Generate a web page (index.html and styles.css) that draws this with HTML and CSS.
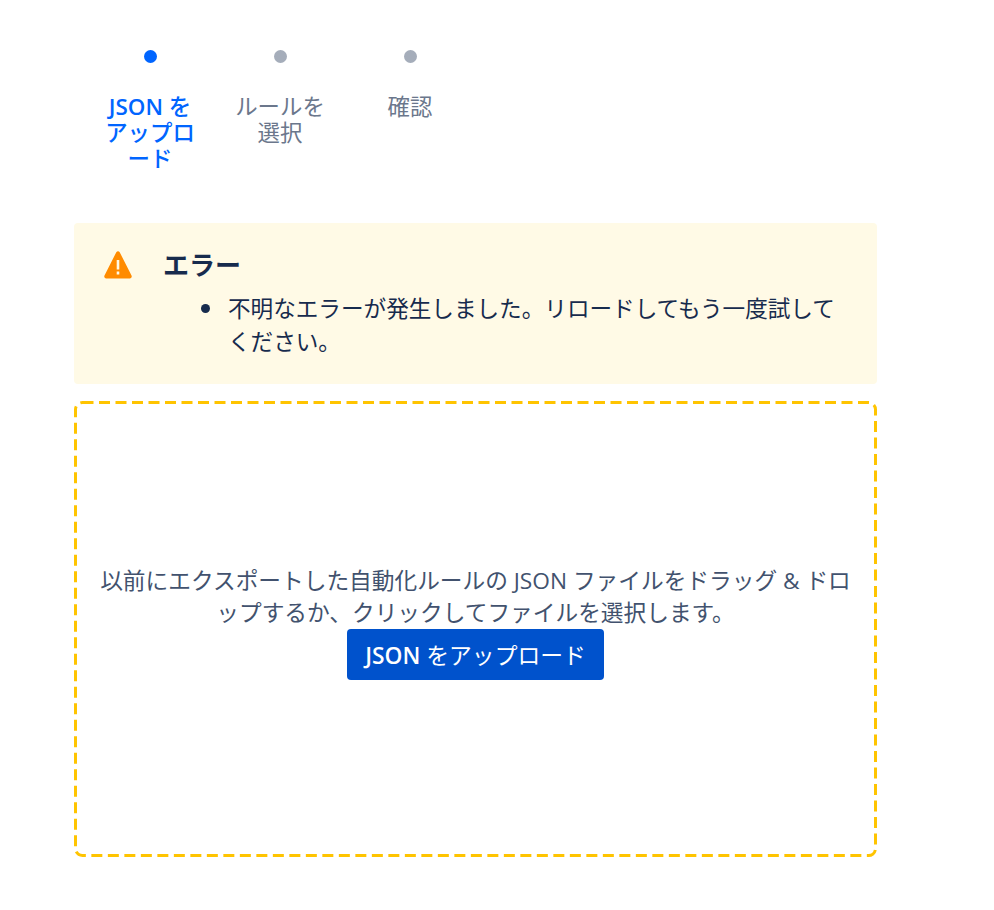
FILE: index.html
```html
<!DOCTYPE html>
<html lang="ja">
<head>
    <meta charset="UTF-8">
    <title>JSON をアップロード</title>
    <link rel="stylesheet" href="styles.css">
</head>
<body>
    <div class="container">
        <!-- Steps -->
        <div class="steps">
            <div class="step step-active">
                <div class="step-dot"></div>
                <div class="step-label"><span class="latin">JSON</span> を アップロード</div>
            </div>
            <div class="step">
                <div class="step-dot"></div>
                <div class="step-label">ルールを選択</div>
            </div>
            <div class="step">
                <div class="step-dot"></div>
                <div class="step-label">確認</div>
            </div>
        </div>

        <!-- Error -->
        <div class="alert">
            <svg class="alert-icon" viewBox="0 0 28 28" width="28" height="28">
                <path fill="#ff8b00" fill-rule="evenodd" d="M12.300 1.200c.8-1.400 2.600-1.400 3.400 0l11.800 23.300c.7 1.400-.2 2.900-1.700 2.900H2.200c-1.500 0-2.400-1.500-1.700-2.900L12.300 1.200zM12.700 9h2.600v9.500h-2.600V9zm0 11.500h2.600v3h-2.600v-3z"/>
            </svg>
            <div class="alert-body">
                <div class="alert-title">エラー</div>
                <ul class="alert-list">
                    <li>不明なエラーが発生しました。リロードしてもう一度試してください。</li>
                </ul>
            </div>
        </div>

        <!-- Drop area -->
        <div class="dropzone">
            <p class="dropzone-text">以前にエクスポートした自動化ルールの JSON ファイルをドラッグ &amp; ドロップするか、クリックしてファイルを選択します。</p>
            <button class="upload-btn" type="button"><span class="latin">JSON</span> をアップロード</button>
        </div>
    </div>
</body>
</html>
```

FILE: styles.css
```css
body {
    margin: 0;
    background-color: white;
    color: #172b4d;
    font-family: "Open Sans", "Noto Sans CJK JP", sans-serif;
    font-size: 22.6px;
    line-height: 33px;
}
.latin {
    font-weight: 600;
}
.container {
    width: 803px;
    margin-left: 74px;
    padding-top: 48px;
}
.steps {
    display: flex;
    padding-left: 11px;
    height: 175px;
}
.step {
    width: 130px;
    display: flex;
    flex-direction: column;
    align-items: center;
    color: #6b778c;
}
.step-dot {
    width: 13px;
    height: 13px;
    margin: 2px 0 31px;
    border-radius: 50%;
    background-color: #a5adba;
}
.step-label {
    width: 96px;
    text-align: center;
    font-size: 22.4px;
    line-height: 26px;
}
.step-active {
    color: #0065ff;
    font-weight: 500;
}
.step-active .step-dot {
    background-color: #0065ff;
}
.alert {
    display: flex;
    height: 161px;
    box-sizing: border-box;
    padding: 28px 30px;
    background-color: #fffae6;
    border-radius: 4px;
}
.alert-icon {
    flex-shrink: 0;
    margin-right: 31px;
}
.alert-title {
    font-size: 26px;
    font-weight: 700;
    line-height: 28px;
}
.alert-list {
    margin: 13px 0 0;
    padding-left: 65px;
    list-style: none;
}
.alert-list li {
    position: relative;
}
.alert-list li::before {
    content: "";
    position: absolute;
    left: -27px;
    top: 12px;
    width: 9px;
    height: 9px;
    border-radius: 50%;
    background-color: #172b4d;
}
.dropzone {
    display: flex;
    flex-direction: column;
    align-items: center;
    justify-content: center;
    height: 456px;
    box-sizing: border-box;
    margin-top: 17px;
    padding: 0 20px 14px;
    background-image: url("data:image/svg+xml,%3Csvg xmlns='http://www.w3.org/2000/svg' width='803' height='456'%3E%3Crect x='1.5' y='1.500' width='800' height='453' rx='7' fill='none' stroke='%23ffc400' stroke-width='3' stroke-dasharray='11 5.500'/%3E%3C/svg%3E");
    text-align: center;
    color: #42526e;
}
.dropzone-text {
    margin: 0;
    font-size: 22.7px;
    line-height: 32px;
}
.upload-btn {
    width: 257px;
    height: 51px;
    margin-top: 0;
    padding: 0;
    background-color: #0052cc;
    color: white;
    border: none;
    border-radius: 4px;
    font-family: inherit;
    font-size: 22.8px;
    font-weight: 400;
    cursor: pointer;
}
```
